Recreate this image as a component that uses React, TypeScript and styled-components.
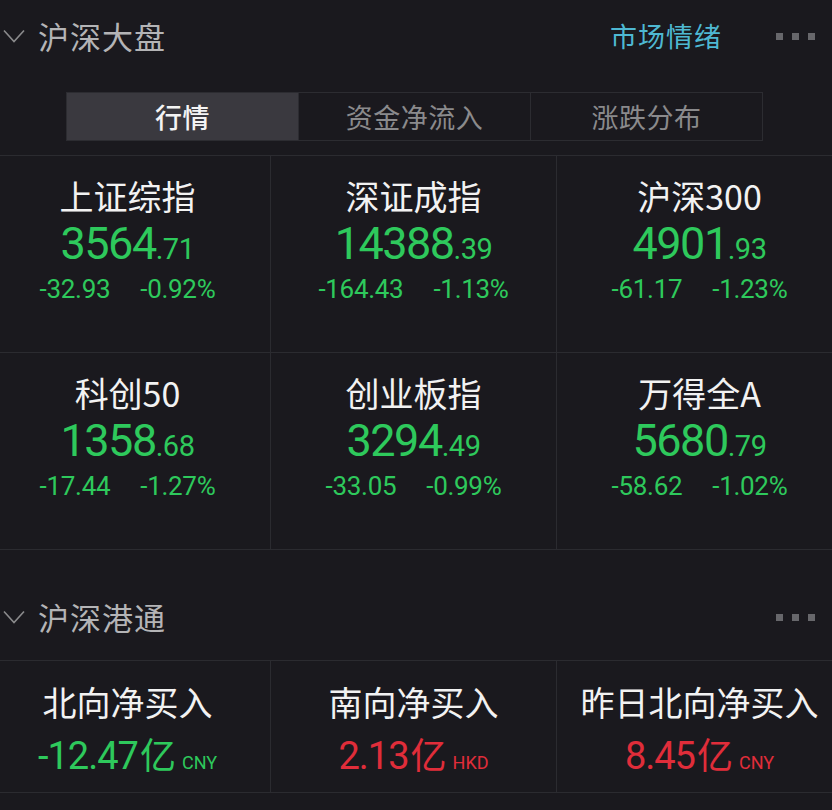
import styled, { createGlobalStyle } from "styled-components";

const GlobalStyle = createGlobalStyle`
	html, body {
		margin: 0;
		padding: 0;
		background: #1a191e;
	}
	body {
		font-family: "Noto Sans CJK SC", "Noto Sans", sans-serif;
	}
`;

const GREEN = "#2ec95c";
const RED = "#e02d3a";

type TIndex = { name: string; int: string; dec: string; change: string; pct: string };

const indices: TIndex[] = [
	{ name: "上证综指", int: "3564", dec: ".71", change: "-32.93", pct: "-0.92%" },
	{ name: "深证成指", int: "14388", dec: ".39", change: "-164.43", pct: "-1.13%" },
	{ name: "沪深300", int: "4901", dec: ".93", change: "-61.17", pct: "-1.23%" },
	{ name: "科创50", int: "1358", dec: ".68", change: "-17.44", pct: "-1.27%" },
	{ name: "创业板指", int: "3294", dec: ".49", change: "-33.05", pct: "-0.99%" },
	{ name: "万得全A", int: "5680", dec: ".79", change: "-58.62", pct: "-1.02%" },
];

type TFlow = { name: string; value: string; unit: string; up: boolean };

const flows: TFlow[] = [
	{ name: "北向净买入", value: "-12.47", unit: "CNY", up: false },
	{ name: "南向净买入", value: "2.13", unit: "HKD", up: true },
	{ name: "昨日北向净买入", value: "8.45", unit: "CNY", up: true },
];

const Page = styled.div`
	width: 832px;
	height: 810px;
	overflow: hidden;
	background: #1a191e;
`;

const Header = styled.div<{ $height: number; $padTop?: number }>`
	display: flex;
	align-items: center;
	height: ${({ $height }) => $height}px;
	box-sizing: border-box;
	padding: ${({ $padTop }) => $padTop ?? 0}px 17px 0 3px;
`;

const HeaderLeft = styled.div`
	display: flex;
	align-items: center;
	gap: 13px;
	flex: 1;
	height: 40px;
`;

const SectionTitle = styled.span`
	font-size: 31px;
	line-height: 40px;
	color: #b4b4b6;
	letter-spacing: 1px;
`;

const SentimentLink = styled.span`
	font-size: 27px;
	line-height: 40px;
	color: #4eb8d2;
	margin-right: 54px;
	letter-spacing: 1px;
`;

const Dots = styled.div`
	display: flex;
	gap: 9px;
`;

const Dot = styled.span`
	width: 7px;
	height: 7px;
	background: #67676b;
`;

const Tabs = styled.div`
	display: flex;
	margin: 20px 0 14px 66px;
	width: 697px;
	height: 49px;
	border: 1px solid #2c2c31;
	box-sizing: border-box;
`;

const Tab = styled.div<{ $active?: boolean }>`
	flex: 1;
	display: flex;
	align-items: center;
	justify-content: center;
	font-size: 27px;
	letter-spacing: 0.5px;
	color: ${({ $active }) => ($active ? "#f4f4f4" : "#8a8a8c")};
	background: ${({ $active }) => ($active ? "#3a393f" : "transparent")};
	font-weight: ${({ $active }) => ($active ? 500 : 400)};
	& + & {
		border-left: 1px solid #2c2c31;
	}
`;

const Grid = styled.div`
	display: grid;
	grid-template-columns: repeat(3, 286px);
	margin-left: -15px;
	width: 858px;
	border-top: 1px solid #2b2b30;
`;

const Cell = styled.div<{ $padTop: number; $height: number }>`
	display: flex;
	flex-direction: column;
	align-items: center;
	box-sizing: border-box;
	height: ${({ $height }) => $height}px;
	padding-top: ${({ $padTop }) => $padTop}px;
	border-bottom: 1px solid #2b2b30;
	border-right: 1px solid #2b2b30;
`;

const CellTitle = styled.div`
	font-size: 34px;
	line-height: 40px;
	color: #f2f2f2;
	font-family: "Noto Sans CJK SC", sans-serif;
	white-space: nowrap;
`;

const Num = styled.div<{ $color: string }>`
	font-family: Roboto, "Noto Sans CJK SC", sans-serif;
	font-weight: 400;
	color: ${({ $color }) => $color};
	white-space: nowrap;
`;

const Price = styled(Num)`
	font-size: 45px;
	line-height: 48px;
	letter-spacing: -1.5px;
	margin-top: 4px;
`;

const Small = styled.span<{ $size: number }>`
	font-size: ${({ $size }) => $size}px;
	letter-spacing: -0.5px;
`;

const Changes = styled(Num)`
	display: flex;
	gap: 30px;
	font-size: 26px;
	line-height: 32px;
	letter-spacing: -0.3px;
`;

const FlowValue = styled(Num)`
	display: flex;
	align-items: baseline;
	font-size: 38px;
	line-height: 44px;
	letter-spacing: -1px;
	margin-top: 9px;
`;

const Yi = styled.span`
	font-family: "Noto Sans CJK SC", sans-serif;
	font-size: 36px;
	margin-left: 2px;
	letter-spacing: 0;
`;

const Unit = styled.span`
	font-family: Roboto, sans-serif;
	font-size: 18px;
	letter-spacing: 0;
	margin-left: 6px;
`;

const Chevron = () => (
	<svg width="22" height="14" viewBox="0 0 22 14">
		<polyline points="1,1.5 11,12.5 21,1.5" fill="none" stroke="#8a8a8c" strokeWidth="1.6" />
	</svg>
);

const MoreDots = () => (
	<Dots>
		<Dot />
		<Dot />
		<Dot />
	</Dots>
);

export default function App() {
	return (
		<Page>
			<GlobalStyle />
			<Header $height={72}>
				<HeaderLeft>
					<Chevron />
					<SectionTitle>沪深大盘</SectionTitle>
				</HeaderLeft>
				<SentimentLink>市场情绪</SentimentLink>
				<MoreDots />
			</Header>
			<Tabs>
				<Tab $active>行情</Tab>
				<Tab>资金净流入</Tab>
				<Tab>涨跌分布</Tab>
			</Tabs>
			<Grid>
				{indices.map((item) => (
					<Cell key={item.name} $padTop={20} $height={197}>
						<CellTitle>{item.name}</CellTitle>
						<Price $color={GREEN}>
							{item.int}
							<Small $size={29}>{item.dec}</Small>
						</Price>
						<Changes $color={GREEN}>
							<span>{item.change}</span>
							<span>{item.pct}</span>
						</Changes>
					</Cell>
				))}
			</Grid>
			<Header $height={110} $padTop={24}>
				<HeaderLeft>
					<Chevron />
					<SectionTitle>沪深港通</SectionTitle>
				</HeaderLeft>
				<MoreDots />
			</Header>
			<Grid>
				{flows.map((item) => (
					<Cell key={item.name} $padTop={21} $height={132}>
						<CellTitle>{item.name}</CellTitle>
						<FlowValue $color={item.up ? RED : GREEN}>
							{item.value}
							<Yi>亿</Yi>
							<Unit>{item.unit}</Unit>
						</FlowValue>
					</Cell>
				))}
			</Grid>
		</Page>
	);
}
